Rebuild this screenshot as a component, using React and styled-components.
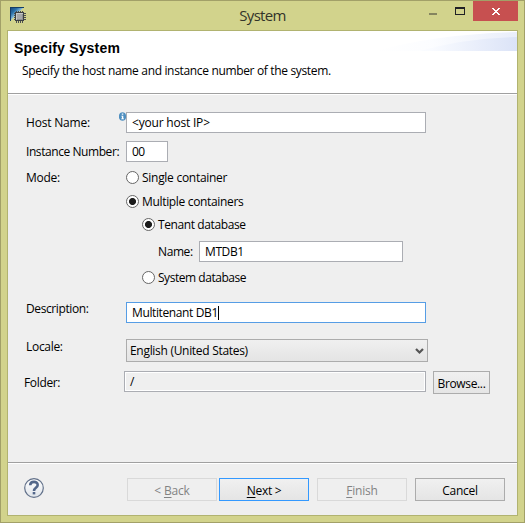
import React from 'react';
import styled, { createGlobalStyle } from 'styled-components';

const GlobalStyle = createGlobalStyle`
  * { box-sizing: border-box; }
  body { margin: 0; font-family: "Open Sans", "Noto Sans", sans-serif; font-size: 12px; color: #000; }
`;

const Window = styled.div`
  width: 525px;
  height: 523px;
  display: flex;
  flex-direction: column;
  background: #d2d38c;
  border: 1px solid #a2a068;
  padding: 0 6px 6px;
`;

const TitleBar = styled.header`
  flex: none;
  height: 29px;
  display: grid;
  grid-template-columns: 94px 1fr 94px;
  align-items: start;
`;

const AppIcon = styled.svg`
  width: 16px;
  height: 16px;
  margin: 6px 0 0 3px;
`;

const Title = styled.h1`
  margin: 0;
  text-align: center;
  font-size: 15px;
  font-weight: 400;
  line-height: 29px;
  color: #33342a;
  letter-spacing: -0.7px;
`;

const WindowButtons = styled.div`
  display: flex;
  align-items: flex-start;
  justify-content: flex-end;
`;

const Glyph = styled.svg`
  width: ${p => p.$w}px;
  height: 20px;
  flex: none;
`;

const CloseButton = styled.button`
  width: 45px;
  height: 20px;
  margin: 0;
  padding: 0;
  border: 0;
  background: #c75050;
  display: flex;
  flex: none;
`;

const Client = styled.main`
  flex: 1;
  display: flex;
  flex-direction: column;
  border: 1px solid #b1b370;
  background: #efefef;
`;

const Banner = styled.section`
  position: relative;
  height: 64px;
  flex: none;
  background: #fff;
  border-bottom: 1px solid #fff;
  box-shadow: inset 0 -1px #a0a0a0;
  padding: 8px 6px 0;
`;

const Swoosh = styled.svg`
  position: absolute;
  right: 0;
  top: 0;
  width: 142px;
  height: 20px;
`;

const Heading = styled.h2`
  margin: 0;
  font: bold 14px/18px "Liberation Sans", Arial, sans-serif;
  letter-spacing: 0.18px;
`;

const Copy = styled.p`
  margin: 5px 0 0 8px;
  line-height: 18px;
  letter-spacing: -0.34px;
  white-space: nowrap;
`;

const Form = styled.form`
  flex: 1;
  padding: 17px 0 0 18px;
`;

const Row = styled.div`
  display: flex;
  height: ${p => p.$h}px;
  margin-bottom: ${p => p.$gap}px;
  padding-left: ${p => p.$indent || 0}px;
`;

const Label = styled.label`
  flex: none;
  width: ${p => p.$w || 100}px;
  line-height: 21px;
  margin-top: ${p => p.$shift || 0}px;
  margin-left: ${p => p.$pull || 0}px;
  margin-right: ${p => -(p.$push || 0)}px;
  letter-spacing: ${p => p.$ls}px;
  white-space: nowrap;
`;

const Field = styled.div`
  position: relative;
  display: flex;
  align-items: center;
  width: ${p => p.$w}px;
  height: 21px;
  flex: none;
  padding-left: 5px;
  background: ${p => (p.$readOnly ? '#efefef' : '#fff')};
  border: 1px solid ${p => (p.$focused ? '#569de5' : '#abadb3')};
  box-shadow: ${p => (p.$readOnly ? 'inset 0 0 0 1px #fff' : 'none')};
  line-height: 19px;
`;

const Text = styled.span`
  letter-spacing: ${p => p.$ls || 0}px;
  white-space: nowrap;
`;

const Caret = styled.span`
  width: 1px;
  height: 14px;
  background: #000;
`;

const InfoBadge = styled.svg`
  position: absolute;
  left: -8px;
  top: -1px;
  width: 7px;
  height: 9px;
`;

const Option = styled.div`
  display: flex;
  align-items: center;
  height: 15px;
  line-height: 15px;
`;

const Dot = styled.span`
  width: 13px;
  height: 13px;
  flex: none;
  margin-right: 3px;
  border: 1px solid #666;
  border-radius: 50%;
  background: ${p => (p.$on ? 'radial-gradient(circle, #1c1c1c 3.1px, #fff 3.9px)' : '#fff')};
`;

const Select = styled.div`
  display: flex;
  align-items: center;
  justify-content: space-between;
  width: 302px;
  height: 23px;
  padding: 0 3px;
  border: 1px solid #acacac;
  background: linear-gradient(#f0f0f0, #e4e4e4);
`;

const Chevron = styled.svg`
  width: 9px;
  height: 8px;
`;

const Button = styled.button`
  display: flex;
  align-items: center;
  justify-content: center;
  flex: none;
  width: ${p => p.$w || 90}px;
  height: 23px;
  margin: 0 0 0 ${p => p.$gap || 0}px;
  padding: 1px 0 0;
  font: inherit;
  color: ${p => (p.disabled ? '#838383' : '#000')};
  background: ${p => (p.disabled ? '#efefef' : 'linear-gradient(#f0f0f0, #e5e5e5)')};
  border: 1px solid ${p => (p.disabled ? '#d9d9d9' : p.$primary ? '#3399ff' : '#acacac')};
  u { text-underline-offset: 2px; }
`;

const Footer = styled.footer`
  flex: none;
  display: flex;
  height: 53px;
  padding: 15px 12px 0 16px;
  border-top: 1px solid #a0a0a0;
  box-shadow: inset 0 1px #fff;
`;

const Help = styled.svg`
  width: 20px;
  height: 20px;
  margin-right: 83px;
  flex: none;
`;

const Radio = ({ on, ls, children }) => (
  <Option role="radio" aria-checked={!!on}>
    <Dot $on={on} />
    <Text $ls={ls}>{children}</Text>
  </Option>
);

export default function App() {
  return (
    <>
      <GlobalStyle />
      <Window>
        <TitleBar>
          <AppIcon viewBox="0 0 16 16">
            <defs>
              <linearGradient id="corner" x2="1" y2="1">
                <stop offset="0" stopColor="#123f70" />
                <stop offset=".3" stopColor="#2a72ab" />
                <stop offset=".5" stopColor="#8cc0de" />
              </linearGradient>
            </defs>
            <path d="M0 0h14L0 14z" fill="url(#corner)" />
            <path d="M0 0h14v1H1v13H0z" fill="#143d66" />
            <path d="M6 4h1v12H6zM8 4h1v12H8zM10 4h1v12h-1zM12 4h1v12h-1zM4 6h12v1H4zM4 8h12v1H4zM4 10h12v1H4zM4 12h12v1H4z" fill="#4b4e50" shapeRendering="crispEdges" />
            <path d="M5 5h9v9H5z" fill="#3d4042" />
            <path d="M6 6h7v7H6z" fill="#c6c8c8" />
            <path d="M7 7h6v6H7z" fill="#8d9092" />
            <path d="M7 7h5v5H7z" fill="#a6a8a9" />
          </AppIcon>
          <Title>System</Title>
          <WindowButtons>
            <Glyph $w={44} viewBox="0 0 44 20" shapeRendering="crispEdges">
              <path d="M0 12h8v2H0z" fill="#85855f" />
              <path d="M26 6h10v8H26zM27 8v5h8V8z" fill="#202125" fillRule="evenodd" />
            </Glyph>
            <CloseButton aria-label="Close">
              <Glyph $w={45} viewBox="0 0 45 20" shapeRendering="crispEdges">
                <path d="M19 7h2v1h1v1h2V8h1V7h2v1h-1v1h-1v1h-1v1h1v1h1v1h1v1h-2v-1h-1v-1h-2v1h-1v1h-2v-1h1v-1h1v-1h1v-1h-1V9h-1V8h-1z" fill="#fff" />
              </Glyph>
            </CloseButton>
          </WindowButtons>
        </TitleBar>

        <Client>
          <Banner>
            <Swoosh viewBox="0 0 142 20">
              <defs>
                <linearGradient id="wash" gradientUnits="userSpaceOnUse" x1="0" x2="142">
                  <stop offset="0" stopColor="#fff" />
                  <stop offset=".4" stopColor="#f9fbff" />
                  <stop offset="1" stopColor="#dbe3f7" />
                </linearGradient>
              </defs>
              <path d="M0 20Q62 3 142 1V20z" fill="url(#wash)" opacity=".6" />
              <path d="M45 20Q90 7 142 6V20z" fill="url(#wash)" />
            </Swoosh>
            <Heading>Specify System</Heading>
            <Copy>Specify the host name and instance number of the system.</Copy>
          </Banner>

          <Form>
            <Row $h={21} $gap={8}>
              <Label $ls={-0.2}>Host Name:</Label>
              <Field $w={300}>
                <InfoBadge viewBox="0 0 7 9">
                  <ellipse cx="3.5" cy="4.5" rx="3.6" ry="4.3" fill="#4f8fc0" />
                  <path d="M2.8 1.6h1.5v1.2H2.8zM2.3 3.7h2v2.8h.7v.8H2.2v-.8h.7V4.5h-.6z" fill="#fff" />
                </InfoBadge>
                <Text $ls={-0.2}>&lt;your host IP&gt;</Text>
              </Field>
            </Row>
            <Row $h={21} $gap={8}>
              <Label $ls={-0.43}>Instance Number:</Label>
              <Field $w={42}><Text $ls={-0.6}>00</Text></Field>
            </Row>
            <Row $h={15} $gap={9}>
              <Label $ls={-0.3} $shift={-3}>Mode:</Label>
              <Radio ls={-0.28}>Single container</Radio>
            </Row>
            <Row $h={15} $gap={8} $indent={100}>
              <Radio on ls={-0.33}>Multiple containers</Radio>
            </Row>
            <Row $h={15} $gap={9} $indent={116}>
              <Radio on ls={-0.4}>Tenant database</Radio>
            </Row>
            <Row $h={21} $gap={8} $indent={132}>
              <Label $w={41} $ls={-0.4}>Name:</Label>
              <Field $w={204}><Text $ls={-0.4}>MTDB1</Text></Field>
            </Row>
            <Row $h={15} $gap={17} $indent={116}>
              <Radio ls={-0.46}>System database</Radio>
            </Row>
            <Row $h={21} $gap={16}>
              <Label $ls={-0.4} $shift={-4}>Description:</Label>
              <Field $w={300} $focused><Text $ls={-0.38}>Multitenant DB1</Text><Caret /></Field>
            </Row>
            <Row $h={23} $gap={9}>
              <Label $ls={-0.3} $shift={-3}>Locale:</Label>
              <Select>
                <Text $ls={-0.3}>English (United States)</Text>
                <Chevron viewBox="0 0 9 8"><path d="M1 2L4.5 5.5 8 2" fill="none" stroke="#555" strokeWidth="2.2" /></Chevron>
              </Select>
            </Row>
            <Row $h={23} $gap={0}>
              <Label $ls={-0.35} $pull={-2} $shift={1}>Folder:</Label>
              <Field $w={302} $readOnly><Text>/</Text></Field>
              <Button type="button" $w={57} $gap={7}><Text $ls={-0.35}>Browse...</Text></Button>
            </Row>
          </Form>

          <Footer>
            <Help viewBox="0 0 20 20">
              <defs>
                <linearGradient id="orb" x2="0" y2="1"><stop stopColor="#fff" /><stop offset="1" stopColor="#dfe4ea" /></linearGradient>
              </defs>
              <circle cx="10" cy="10" r="9.3" fill="url(#orb)" stroke="#62718a" strokeWidth="1.2" />
              <path d="M6.2 7.2C6.2 2.8 13.7 2.8 13.7 7c0 2.9-3.7 2.8-3.7 6" fill="none" stroke="#53678a" strokeWidth="2.6" />
              <path d="M8.7 14h2.6v2.4H8.7z" fill="#53678a" />
            </Help>
            <Button disabled><Text $ls={-0.2}>&lt; <u>B</u>ack</Text></Button>
            <Button $primary $gap={2}><Text $ls={-0.3}><u>N</u>ext &gt;</Text></Button>
            <Button disabled $gap={8}><Text $ls={-0.2}><u>F</u>inish</Text></Button>
            <Button $gap={8}><Text $ls={-0.25}>Cancel</Text></Button>
          </Footer>
        </Client>
      </Window>
    </>
  );
}
